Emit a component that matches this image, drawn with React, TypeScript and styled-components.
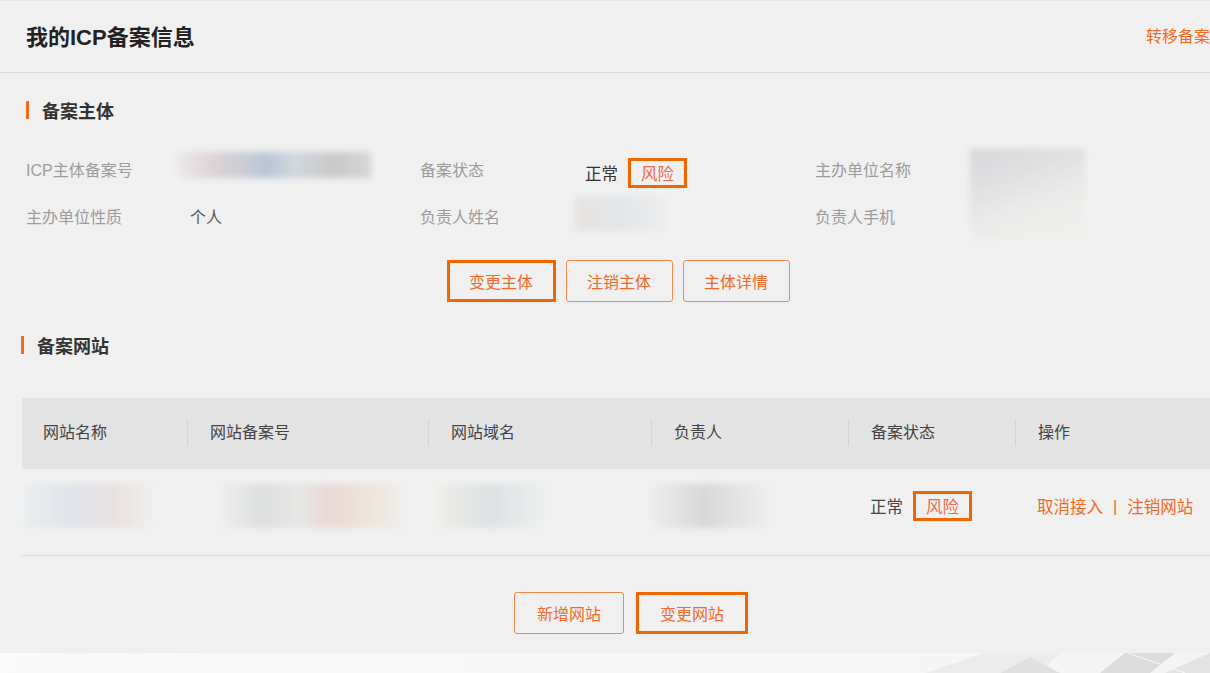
import React from "react";
import styled, { createGlobalStyle } from "styled-components";

const GlobalStyle = createGlobalStyle`
  html, body {
    margin: 0;
    padding: 0;
  }
  body {
    background: #f7f7f7;
    font-family: "Liberation Sans", "Noto Sans CJK SC", sans-serif;
  }
`;

const ORANGE = "#f26b1d";
const MARK = "#f26600";

const Page = styled.div`
  width: 1210px;
  height: 673px;
  overflow: hidden;
  display: flex;
  flex-direction: column;
`;

const Panel = styled.main`
  flex: none;
  height: 653px;
  box-sizing: border-box;
  background: #f0f0f0;
  border-top: 1px solid #e6e6e6;
`;

const Header = styled.header`
  display: flex;
  align-items: center;
  justify-content: space-between;
  height: 72px;
  padding: 0 0 4px 26px;
  box-sizing: border-box;
  border-bottom: 1px solid #dcdcdc;
`;

const Title = styled.h1`
  margin: 0;
  font-size: 22px;
  font-weight: bold;
  color: #222;
`;

const TransferLink = styled.a`
  font-size: 16px;
  color: ${ORANGE};
  white-space: nowrap;
  text-decoration: none;
`;

const Section = styled.section<{ $left: number }>`
  padding: 0 0 0 ${(p) => p.$left}px;
`;

const SectionTitle = styled.h2<{ $top: number }>`
  display: flex;
  align-items: center;
  margin: ${(p) => p.$top}px 0 0;
  height: 24px;
  font-size: 18px;
  font-weight: bold;
  color: #333;

  &::before {
    content: "";
    width: 3px;
    height: 18px;
    margin-right: 13px;
    background: ${ORANGE};
  }
`;

const InfoGrid = styled.div`
  display: grid;
  grid-template-columns: 152px 242px 155px 240px 155px 1fr;
  grid-template-rows: 47px 47px;
  align-items: center;
  margin-top: 23px;
`;

const Label = styled.span`
  font-size: 16px;
  color: #9c9c9c;
`;

const Value = styled.span`
  font-size: 16px;
  color: #555;
  padding-left: 12px;
`;

const Status = styled.div<{ $pad: number; $dy?: number; $tone?: string }>`
  display: flex;
  align-items: center;
  padding-left: ${(p) => p.$pad}px;
  margin-top: ${(p) => p.$dy ?? 0}px;
  font-size: 16.5px;
  color: ${(p) => p.$tone ?? "#333"};
`;

const RiskBox = styled.span`
  display: inline-flex;
  align-items: center;
  height: 30px;
  box-sizing: border-box;
  margin-left: 10px;
  padding: 0 10px;
  border: 3px solid ${MARK};
  color: #ef6a4c;
`;

const Blur = styled.div<{ $w: number; $h: number; $bg: string; $ml?: number; $mb?: number }>`
  width: ${(p) => p.$w}px;
  height: ${(p) => p.$h}px;
  margin-left: ${(p) => p.$ml ?? 0}px;
  margin-bottom: ${(p) => p.$mb ?? 0}px;
  background: ${(p) => p.$bg};
  filter: blur(3px);
`;

const CompanyBlur = styled(Blur)`
  grid-column: 6;
  grid-row: 1 / span 2;
  align-self: start;
  margin-top: 4px;
`;

const ButtonRow = styled.div<{ $top: number; $shift: number; $gap: number }>`
  display: flex;
  justify-content: center;
  gap: ${(p) => p.$gap}px;
  margin-top: ${(p) => p.$top}px;
  padding-left: ${(p) => p.$shift}px;
`;

const ActionButton = styled.button<{ $focus?: boolean; $w: number }>`
  width: ${(p) => p.$w}px;
  height: 42px;
  box-sizing: border-box;
  background: transparent;
  border: ${(p) => (p.$focus ? `3px solid ${MARK}` : "1px solid #f08a4b")};
  border-radius: ${(p) => (p.$focus ? 0 : 3)}px;
  color: #f06a2a;
  font-family: inherit;
  font-size: 16px;
  cursor: pointer;
`;

const columns = "165px 241px 223px 197px 167px 1fr";

const TableHead = styled.div`
  display: grid;
  grid-template-columns: ${columns};
  align-items: center;
  height: 71px;
  margin: 41px 0 0 1px;
  padding-bottom: 2px;
  box-sizing: border-box;
  background: #e3e3e3;
`;

const HeadCell = styled.div<{ $first?: boolean }>`
  height: 27px;
  line-height: 27px;
  padding-left: ${(p) => (p.$first ? 21 : 22)}px;
  border-left: ${(p) => (p.$first ? "none" : "1px solid #d3d3d3")};
  font-size: 16px;
  color: #444;
`;

const TableRow = styled.div`
  display: grid;
  grid-template-columns: ${columns};
  align-items: center;
  height: 87px;
  box-sizing: border-box;
  padding-bottom: 12px;
  border-bottom: 1px solid #dcdcdc;
`;

const Actions = styled.div`
  display: flex;
  align-items: center;
  padding-left: 23px;
  font-size: 16.5px;
  color: ${ORANGE};
  white-space: nowrap;
`;

const Divider = styled.span`
  margin: 0 10px;
`;

const Footer = styled.footer`
  flex: 1;
  background: linear-gradient(90deg, #f9f9f9, #f4f4f4);
`;

export default function App() {
  return (
    <Page>
      <GlobalStyle />
      <Panel>
        <Header>
          <Title>我的ICP备案信息</Title>
          <TransferLink href="#">转移备案</TransferLink>
        </Header>

        <Section $left={26}>
          <SectionTitle $top={25}>备案主体</SectionTitle>
          <InfoGrid>
            <Label>ICP主体备案号</Label>
            <Blur
              $w={193}
              $h={26}
              $mb={8}
              $bg="linear-gradient(90deg, #ebe8ea 0%, #ddd3d7 18%, #c8ccd6 36%, #b8c5d8 46%, #d1d7df 60%, #c9c9c9 80%, #d5d5d5 100%)"
            />
            <Label>备案状态</Label>
            <Status $pad={10} $dy={8}>
              正常<RiskBox>风险</RiskBox>
            </Status>
            <Label>主办单位名称</Label>
            <CompanyBlur
              $w={115}
              $h={90}
              $bg="linear-gradient(160deg, #d6d6d8 0%, #dfdfe1 30%, #ebebea 60%, #f0efec 100%)"
            />
            <Label>主办单位性质</Label>
            <Value>个人</Value>
            <Label>负责人姓名</Label>
            <Blur
              $w={92}
              $h={35}
              $mb={4}
              $bg="linear-gradient(90deg, #e7e3e1, #e3e6e9 50%, #ecedee)"
            />
            <Label>负责人手机</Label>
          </InfoGrid>
          <ButtonRow $top={21} $shift={0} $gap={10}>
            <ActionButton $focus $w={109}>变更主体</ActionButton>
            <ActionButton $w={107}>注销主体</ActionButton>
            <ActionButton $w={107}>主体详情</ActionButton>
          </ButtonRow>
        </Section>

        <Section $left={21}>
          <SectionTitle $top={31}>备案网站</SectionTitle>
          <TableHead>
            <HeadCell $first>网站名称</HeadCell>
            <HeadCell>网站备案号</HeadCell>
            <HeadCell>网站域名</HeadCell>
            <HeadCell>负责人</HeadCell>
            <HeadCell>备案状态</HeadCell>
            <HeadCell>操作</HeadCell>
          </TableHead>
          <TableRow>
            <Blur
              $w={128}
              $h={44}
              $ml={3}
              $bg="linear-gradient(90deg, #eaeef0, #dfe3ea 40%, #e8e1df 70%, #f0eeec)"
            />
            <Blur
              $w={184}
              $h={44}
              $ml={35}
              $bg="linear-gradient(90deg, #eeeeee, #dcdfde 22%, #e7e7e5 42%, #e9d8d5 58%, #eee3d9 78%, #f0efed)"
            />
            <Blur
              $w={110}
              $h={44}
              $ml={10}
              $bg="linear-gradient(90deg, #eeeee9, #dde1e3 50%, #eef0f0)"
            />
            <Blur
              $w={120}
              $h={44}
              $bg="linear-gradient(90deg, #eeeeee, #d7d7d9 45%, #efefef)"
            />
            <Status $pad={23} $tone="#444">
              正常<RiskBox>风险</RiskBox>
            </Status>
            <Actions>
              取消接入<Divider>|</Divider>注销网站
            </Actions>
          </TableRow>
          <ButtonRow $top={36} $shift={31} $gap={12}>
            <ActionButton $w={110}>新增网站</ActionButton>
            <ActionButton $focus $w={112}>变更网站</ActionButton>
          </ButtonRow>
        </Section>
      </Panel>
      <Footer>
        <svg width="1210" height="20" viewBox="0 0 1210 20" style={{ display: "block" }}>
          <polygon points="925,20 985,0 1060,0 1040,20" fill="#ececec" />
          <polygon points="1000,20 1030,4 1060,20" fill="#e0e0e0" />
          <polygon points="1100,20 1125,0 1175,0 1150,20" fill="#dcdcdc" />
          <polygon points="1165,20 1210,0 1210,20" fill="#e3e3e3" />
          <line x1="1128" y1="0" x2="1185" y2="20" stroke="#f8f8f8" strokeWidth="1" />
        </svg>
      </Footer>
    </Page>
  );
}
